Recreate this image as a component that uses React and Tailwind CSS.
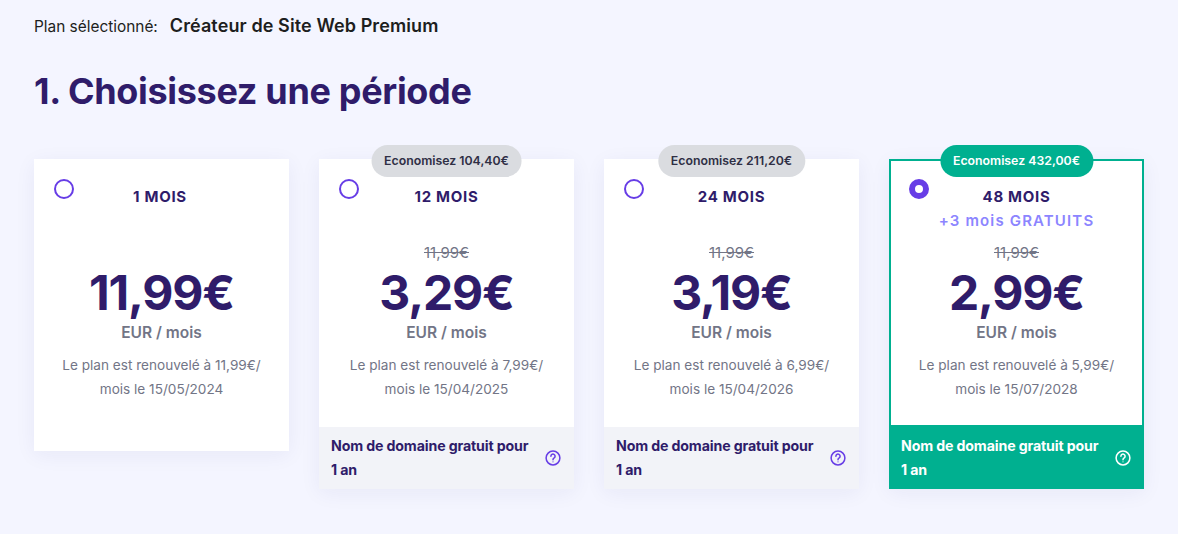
import React from 'react'

const font = { fontFamily: '"Inter", "Noto Sans", sans-serif' }

const plans = [
  { title: '1 MOIS', price: '11,99€', renew: '11,99€', date: '15/05/2024' },
  { title: '12 MOIS', badge: 'Economisez 104,40€', old: '11,99€', price: '3,29€', renew: '7,99€', date: '15/04/2025', domain: true },
  { title: '24 MOIS', badge: 'Economisez 211,20€', old: '11,99€', price: '3,19€', renew: '6,99€', date: '15/04/2026', domain: true },
  { title: '48 MOIS', extra: '+3 mois GRATUITS', badge: 'Economisez 432,00€', old: '11,99€', price: '2,99€', renew: '5,99€', date: '15/07/2028', domain: true, selected: true },
]

const HelpIcon = ({ className }) => (
  <svg viewBox="0 0 16 16" className={className} fill="none" stroke="currentColor" strokeWidth="1.5">
    <circle cx="8" cy="8" r="6.9" />
    <path d="M5.9 6.2a2.1 2.1 0 1 1 3.3 1.7c-.8.5-1.2 1-1.2 1.8" strokeLinecap="round" />
    <circle cx="8" cy="11.8" r="0.6" fill="currentColor" stroke="none" />
  </svg>
)

const PlanCard = ({ plan }) => {
  const { selected } = plan
  return (
    <div className="relative w-[255px] shadow-[0_4px_20px_rgba(29,30,120,0.06)]">
      {plan.badge && (
        <div className={`absolute top-[-14px] left-1/2 -translate-x-1/2 h-8 px-[13px] rounded-2xl flex items-center whitespace-nowrap text-[12.3px] font-semibold z-10 ${selected ? 'bg-[#00b090] text-white' : 'bg-[#dadce0] text-[#2f2f45]'}`}>
          {plan.badge}
        </div>
      )}
      <div className={`relative bg-white flex flex-col items-center ${selected ? 'h-[266px] border-2 border-b-0 border-[#00b090] pt-[25px]' : plan.domain ? 'h-[268px] pt-[27px]' : 'h-[292px] pt-[27px]'}`}>
        <span className={`absolute rounded-full border-[#673de6] w-5 h-5 ${selected ? 'border-[6px] top-[18px] left-[18px]' : 'border-2 top-[20px] left-5'}`} />
        <div className={`h-5 text-[15px] leading-[21px] font-bold tracking-[0.7px] text-[#2f1c6a] ${plan.domain ? '' : 'pr-[3px]'}`}>{plan.title}</div>
        <div className="h-[25px] pt-[5px] text-[15px] leading-5 font-semibold tracking-[1.15px] text-[#8c85ff]">{plan.extra}</div>
        <div className="h-[10px]" />
        <div className="h-6 text-[15px] leading-6 text-[#727586] line-through">{plan.old}</div>
        <div className="h-[56px] text-[48px] leading-[56px] font-bold tracking-[-1.2px] text-[#2f1c6a]">{plan.price}</div>
        <div className="h-6 text-[15.5px] leading-6 font-semibold text-[#727586]">EUR / mois</div>
        <div className="mt-[8px] w-[220px] text-center text-[13.6px] leading-6 text-[#727586]">
          Le plan est renouvelé à {plan.renew}/
          <br />
          mois le {plan.date}
        </div>
      </div>
      {plan.domain && (
        <div className={`pl-3 pr-[13px] flex items-center justify-between ${selected ? 'h-[64px] pt-[2px] bg-[#00b090] text-white' : 'h-[62px] bg-[#f2f3f8] text-[#2f1c6a]'}`}>
          <div className="text-[14.2px] leading-6 font-bold tracking-[-0.15px]">
            Nom de domaine gratuit pour
            <br />
            1 an
          </div>
          <HelpIcon className={`w-4 h-4 shrink-0 ${selected ? 'text-white' : 'text-[#673de6]'}`} />
        </div>
      )}
    </div>
  )
}

export default function App() {
  return (
    <div style={font} className="w-[1178px] h-[534px] overflow-hidden bg-[#f4f5ff] pl-[34px] pt-[14px]">
      <div className="flex items-baseline h-6 leading-6 text-[#1d1e20]">
        <span className="text-[15.4px]">Plan sélectionné:</span>
        <span className="ml-3 text-[18px] font-semibold tracking-[0.1px]">Créateur de Site Web Premium</span>
      </div>
      <h1 className="mt-[31px] text-[36px] leading-[44px] font-bold tracking-[-0.33px] text-[#2f1c6a]">1. Choisissez une période</h1>
      <div className="mt-[46px] flex items-start gap-[30px]">
        {plans.map((plan) => (
          <PlanCard key={plan.title} plan={plan} />
        ))}
      </div>
    </div>
  )
}
